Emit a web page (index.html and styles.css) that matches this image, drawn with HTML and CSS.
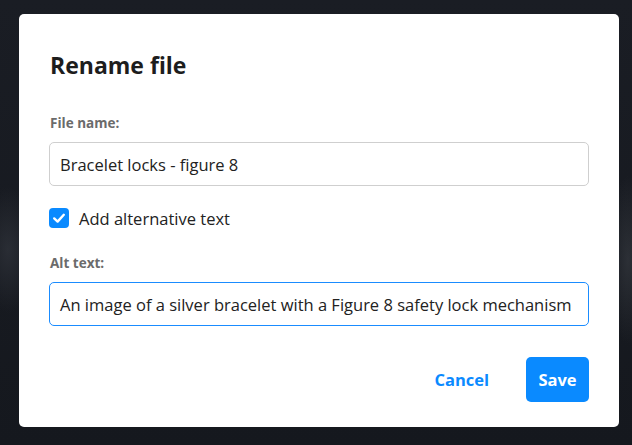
FILE: index.html
```html
<!DOCTYPE html>
<html lang="en">
<head>
<meta charset="utf-8">
<title>Rename file</title>
<link rel="stylesheet" href="styles.css">
</head>
<body>
<div class="backdrop">
  <div class="dialog" role="dialog" aria-labelledby="dlg-title">
    <h1 class="title" id="dlg-title">Rename file</h1>
    <label class="field-label" for="fname">File name:</label>
    <div class="input" id="fname">Bracelet locks - figure 8</div>
    <div class="check-row">
      <span class="checkbox" aria-checked="true" role="checkbox">
        <svg viewBox="0 0 20 20" width="20" height="20"><path d="M5.2 10.4 L8.6 13.6 L14.8 6.8" fill="none" stroke="#fff" stroke-width="2.4" stroke-linecap="round" stroke-linejoin="round"/></svg>
      </span>
      <span class="check-text">Add alternative text</span>
    </div>
    <label class="field-label alt-label" for="alt">Alt text:</label>
    <div class="input input-focus" id="alt">An image of a silver bracelet with a Figure 8 safety lock mechanism</div>
    <div class="actions">
      <button class="btn btn-link">Cancel</button>
      <button class="btn btn-primary">Save</button>
    </div>
  </div>
</div>
</body>
</html>
```
FILE: styles.css
```css
html, body {
  margin: 0;
  padding: 0;
}
body {
  width: 632px;
  height: 445px;
  overflow: hidden;
  background: #171a20;
  font-family: "Open Sans", "Noto Sans", sans-serif;
  color: #222;
}
.backdrop {
  height: 445px;
  padding: 14px 0 0 19px;
  box-sizing: border-box;
  background:
    radial-gradient(ellipse 40px 90px at 8px 250px, rgba(60,64,72,0.5), transparent 70%),
    radial-gradient(ellipse 30px 120px at 628px 260px, rgba(70,74,80,0.45), transparent 70%),
    linear-gradient(180deg, #1a1d24 0%, #15181e 100%);
}
.dialog {
  width: 600px;
  height: 413px;
  box-sizing: border-box;
  padding: 36px 30px 0 30px;
  background: #fff;
  border-radius: 5px;
  display: flex;
  flex-direction: column;
}
.title {
  margin: 0 0 34px 1px;
  font-size: 23px;
  line-height: 30px;
  font-weight: 700;
  color: #1d1d1d;
}
.field-label {
  display: block;
  margin: 0 0 10px 1px;
  font-size: 13.5px;
  line-height: 18px;
  font-weight: 700;
  color: #6b6b6b;
}
.input {
  height: 44px;
  flex: none;
  box-sizing: border-box;
  border: 1px solid #cfcfcf;
  border-radius: 5px;
  padding: 0 10px;
  display: flex;
  align-items: center;
  font-size: 16.5px;
  color: #222;
  white-space: nowrap;
  overflow: hidden;
}
.input-focus {
  border-color: #1a8cff;
}
.check-row {
  display: flex;
  align-items: center;
  gap: 10px;
  margin: 21px 0 25px 0;
  height: 22px;
}
.checkbox {
  width: 20px;
  height: 20px;
  border-radius: 4px;
  background: #0a8aff;
  display: flex;
}
.check-text {
  font-size: 16.5px;
  color: #222;
}
.actions {
  display: flex;
  justify-content: flex-end;
  align-items: center;
  gap: 37px;
  margin-top: 31px;
}
.btn {
  font-family: inherit;
  font-size: 16.5px;
  font-weight: 700;
  border: none;
  border-radius: 5px;
  cursor: pointer;
}
.btn-link {
  background: none;
  color: #0a8aff;
  padding: 0;
}
.btn-primary {
  background: #0a8aff;
  color: #fff;
  height: 45px;
  width: 63px;
  padding: 0;
}
```
